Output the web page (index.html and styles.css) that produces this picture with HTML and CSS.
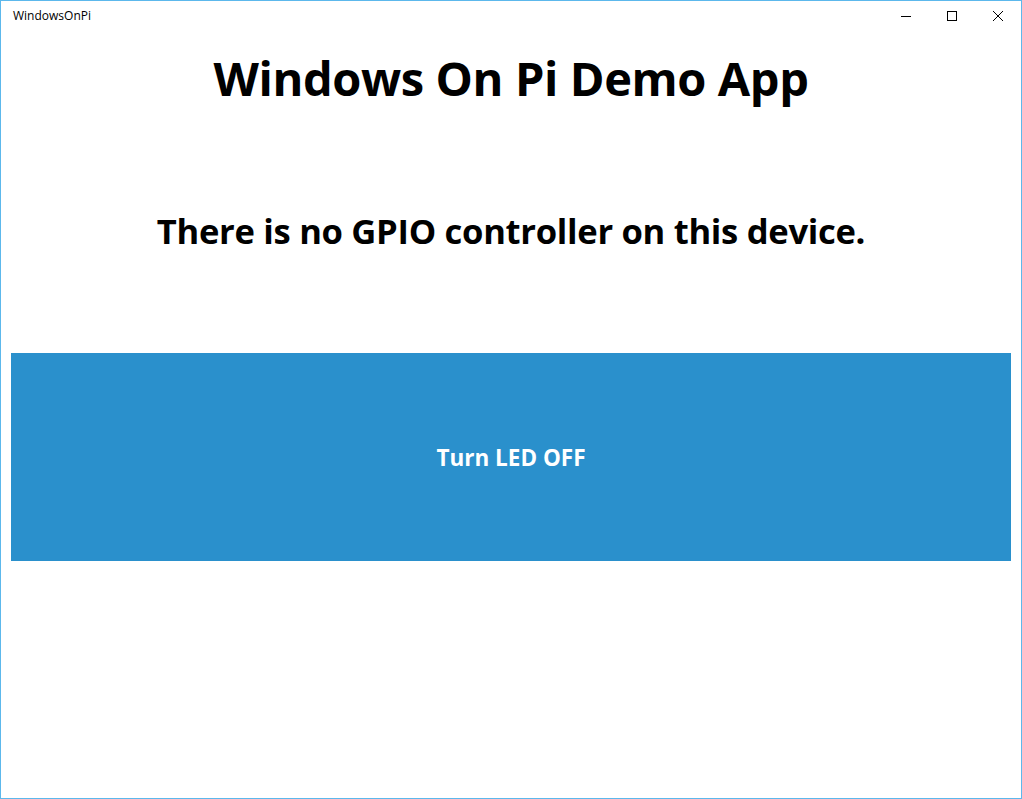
FILE: index.html
```html
<!DOCTYPE html>
<html>
<head>
<meta charset="utf-8">
<link rel="stylesheet" href="styles.css">
</head>
<body>
<div class="window">
  <div class="titlebar">
    <span class="app-name">WindowsOnPi</span>
    <div class="controls">
      <span class="ctrl"><svg width="10" height="10" viewBox="0 0 10 10"><path d="M0 5.5h10" stroke="#000" stroke-width="1"/></svg></span>
      <span class="ctrl"><svg width="10" height="10" viewBox="0 0 10 10"><rect x="0.5" y="0.5" width="9" height="9" fill="none" stroke="#000" stroke-width="1"/></svg></span>
      <span class="ctrl"><svg width="10" height="10" viewBox="0 0 10 10"><path d="M0 0L10 10M10 0L0 10" stroke="#000" stroke-width="1"/></svg></span>
    </div>
  </div>
  <main class="content">
    <h1 class="title">Windows On Pi Demo App</h1>
    <h2 class="status">There is no GPIO controller on this device.</h2>
    <button class="led-btn">Turn LED OFF</button>
  </main>
</div>
</body>
</html>
```
FILE: styles.css
```css
html, body {
  margin: 0;
  padding: 0;
  background: #fff;
}
.window {
  box-sizing: border-box;
  width: 1022px;
  height: 799px;
  border: 1px solid #5cb8ec;
  font-family: "Open Sans", "Noto Sans", sans-serif;
  display: flex;
  flex-direction: column;
}
.titlebar {
  height: 31px;
  display: flex;
  align-items: center;
  justify-content: space-between;
}
.app-name {
  font-size: 12px;
  padding-left: 12px;
  color: #000;
  margin-top: -2px;
}
.controls {
  display: flex;
  height: 31px;
  margin-top: -2px;
}
.ctrl {
  width: 46px;
  display: flex;
  align-items: center;
  justify-content: center;
}
.content {
  padding: 0 10px;
  display: flex;
  flex-direction: column;
  align-items: center;
}
.title {
  margin: 14px 0 0;
  font-size: 47px;
  font-weight: 700;
  line-height: 64px;
  letter-spacing: -0.4px;
  color: #000;
}
.status {
  margin: 98px 0 0;
  font-size: 34.6px;
  font-weight: 700;
  line-height: 46px;
  letter-spacing: -0.3px;
  color: #000;
}
.led-btn {
  margin-top: 99px;
  width: 1000px;
  height: 208px;
  border: none;
  background: #2a90cc;
  color: #fff;
  font-family: "Open Sans", "Noto Sans", sans-serif;
  font-size: 22.5px;
  font-weight: 700;
  letter-spacing: 0;
  padding: 0;
}
```
